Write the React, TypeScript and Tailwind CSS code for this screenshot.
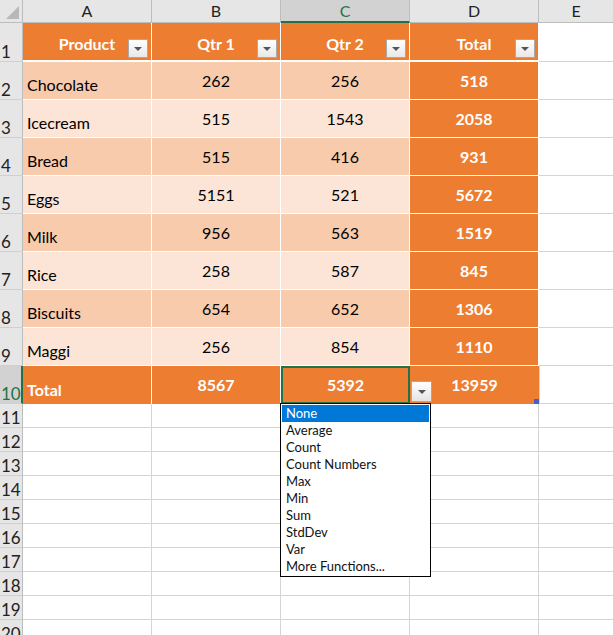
import React from 'react';

const rows = [
  ['Chocolate', '262', '256', '518'],
  ['Icecream', '515', '1543', '2058'],
  ['Bread', '515', '416', '931'],
  ['Eggs', '5151', '521', '5672'],
  ['Milk', '956', '563', '1519'],
  ['Rice', '258', '587', '845'],
  ['Biscuits', '654', '652', '1306'],
  ['Maggi', '256', '854', '1110'],
];

const fns = ['None', 'Average', 'Count', 'Count Numbers', 'Max', 'Min', 'Sum', 'StdDev', 'Var', 'More Functions...'];

function FilterBtn() {
  return (
    <div className="absolute right-[3px] bottom-[2px] w-[20px] h-[19px] bg-gradient-to-b from-white to-[#e8e8e8] border border-[#a8a8a8] flex items-center justify-center">
      <div className="w-0 h-0 border-l-[4px] border-r-[4px] border-t-[4px] border-l-transparent border-r-transparent border-t-[#555]" />
    </div>
  );
}

function RowHead({ n, h, sel }: { n: number; h: string; sel?: boolean }) {
  return (
    <div className={`${h} w-[23px] shrink-0 flex items-end pb-[1px] text-[17px] leading-none border-b border-[#d0d0d0] ${sel ? 'bg-[#d2d2d2] border-r-2 border-r-[#217346] text-[#217346]' : 'bg-[#e6e6e6] border-r border-r-[#bdbdbd] text-[#222]'}`}>
      <span className="pl-[1px]">{n}</span>
    </div>
  );
}

export default function App() {
  const font = { fontFamily: 'Lato, "Open Sans", sans-serif' };
  return (
    <div className="relative w-[613px] h-[635px] overflow-hidden bg-white" style={font}>
      {/* column headers */}
      <div className="flex h-[23px] bg-[#e6e6e6] text-[16px] text-[#222]">
        <div className="w-[23px] border-r border-b border-[#bdbdbd] relative">
          <div className="absolute right-[3px] bottom-[3px] w-0 h-0 border-b-[13px] border-l-[13px] border-b-[#b8b8b8] border-l-transparent" />
        </div>
        {['A', 'B', 'C', 'D'].map((c) => (
          <div key={c} className={`w-[129px] flex items-center justify-center border-r border-[#bdbdbd] ${c === 'C' ? 'bg-[#d2d2d2] border-b-2 border-b-[#217346] text-[#217346]' : 'border-b border-b-[#bdbdbd]'}`}>{c}</div>
        ))}
        <div className="flex-1 flex items-center justify-center border-b border-[#bdbdbd]">E</div>
      </div>

      {/* row 1 */}
      <div className="flex h-[39px]">
        <RowHead n={1} h="h-[39px]" />
        {['Product', 'Qtr 1', 'Qtr 2', 'Total'].map((t) => (
          <div key={t} className="relative w-[129px] bg-[#ed7d31] border-r border-b-2 border-white flex justify-center pt-[9px] text-white font-bold text-[16px]">
            {t}
            <FilterBtn />
          </div>
        ))}
        <div className="flex-1 border-b border-[#d4d4d4]" />
      </div>

      {rows.map((r, i) => (
        <div key={r[0]} className="flex h-[38px]">
          <RowHead n={i + 2} h="h-[38px]" />
          <div className={`w-[129px] border-r border-b border-white flex items-end pb-[2px] pl-[4px] text-[16px] text-black ${i % 2 === 0 ? 'bg-[#f8cbad]' : 'bg-[#fce4d6]'}`}>{r[0]}</div>
          <div className={`w-[129px] border-r border-b border-white flex justify-center pt-[7px] text-[16px] text-black ${i % 2 === 0 ? 'bg-[#f8cbad]' : 'bg-[#fce4d6]'}`}>{r[1]}</div>
          <div className={`w-[129px] border-r border-b border-white flex justify-center pt-[7px] text-[16px] text-black ${i % 2 === 0 ? 'bg-[#f8cbad]' : 'bg-[#fce4d6]'}`}>{r[2]}</div>
          <div className="w-[129px] bg-[#ed7d31] border-r border-b border-white flex justify-center pt-[7px] text-[16px] font-bold text-white">{r[3]}</div>
          <div className="flex-1 border-b border-[#d4d4d4]" />
        </div>
      ))}

      {/* total row */}
      <div className="flex h-[38px]">
        <RowHead n={10} h="h-[38px]" sel />
        <div className="w-[129px] bg-[#ed7d31] border-r border-white flex items-end pb-[2px] pl-[4px] text-[16px] font-bold text-white">Total</div>
        <div className="w-[129px] bg-[#ed7d31] border-r border-white flex justify-center pt-[7px] text-[16px] font-bold text-white">8567</div>
        <div className="w-[129px] bg-[#ed7d31] border-2 border-[#217346] flex justify-center pt-[5px] text-[16px] font-bold text-white">5392</div>
        <div className="relative w-[129px] bg-[#ed7d31] flex justify-center pt-[7px] text-[16px] font-bold text-white">
          13959
          <div className="absolute right-0 bottom-0 w-[5px] h-[5px] bg-[#4a5fc1]" />
        </div>
        <div className="flex-1 border-l border-b border-[#d4d4d4]" />
      </div>

      {Array.from({ length: 10 }, (_, k) => (
        <div key={k} className="flex h-[24px]">
          <RowHead n={k + 11} h="h-[24px]" />
          {[0, 1, 2, 3].map((c) => (
            <div key={c} className="w-[129px] border-r border-b border-[#d4d4d4]" />
          ))}
          <div className="flex-1 border-b border-[#d4d4d4]" />
        </div>
      ))}

      {/* total dropdown button */}
      <div className="absolute left-[411px] top-[381px] w-[21px] h-[21px] bg-gradient-to-b from-white to-[#e4e4e4] border border-[#a8a8a8] flex items-center justify-center">
        <div className="w-0 h-0 border-l-[4px] border-r-[4px] border-t-[4px] border-l-transparent border-r-transparent border-t-[#555]" />
      </div>

      {/* function list */}
      <div className="absolute left-[280px] top-[403px] w-[151px] bg-white border border-black py-[1px] text-[13px] leading-[17px] text-[#111]">
        {fns.map((f) => (
          <div key={f} className={`px-[4px] mx-[1px] ${f === 'None' ? 'bg-[#0078d7] text-white' : ''}`}>{f}</div>
        ))}
      </div>
    </div>
  );
}
